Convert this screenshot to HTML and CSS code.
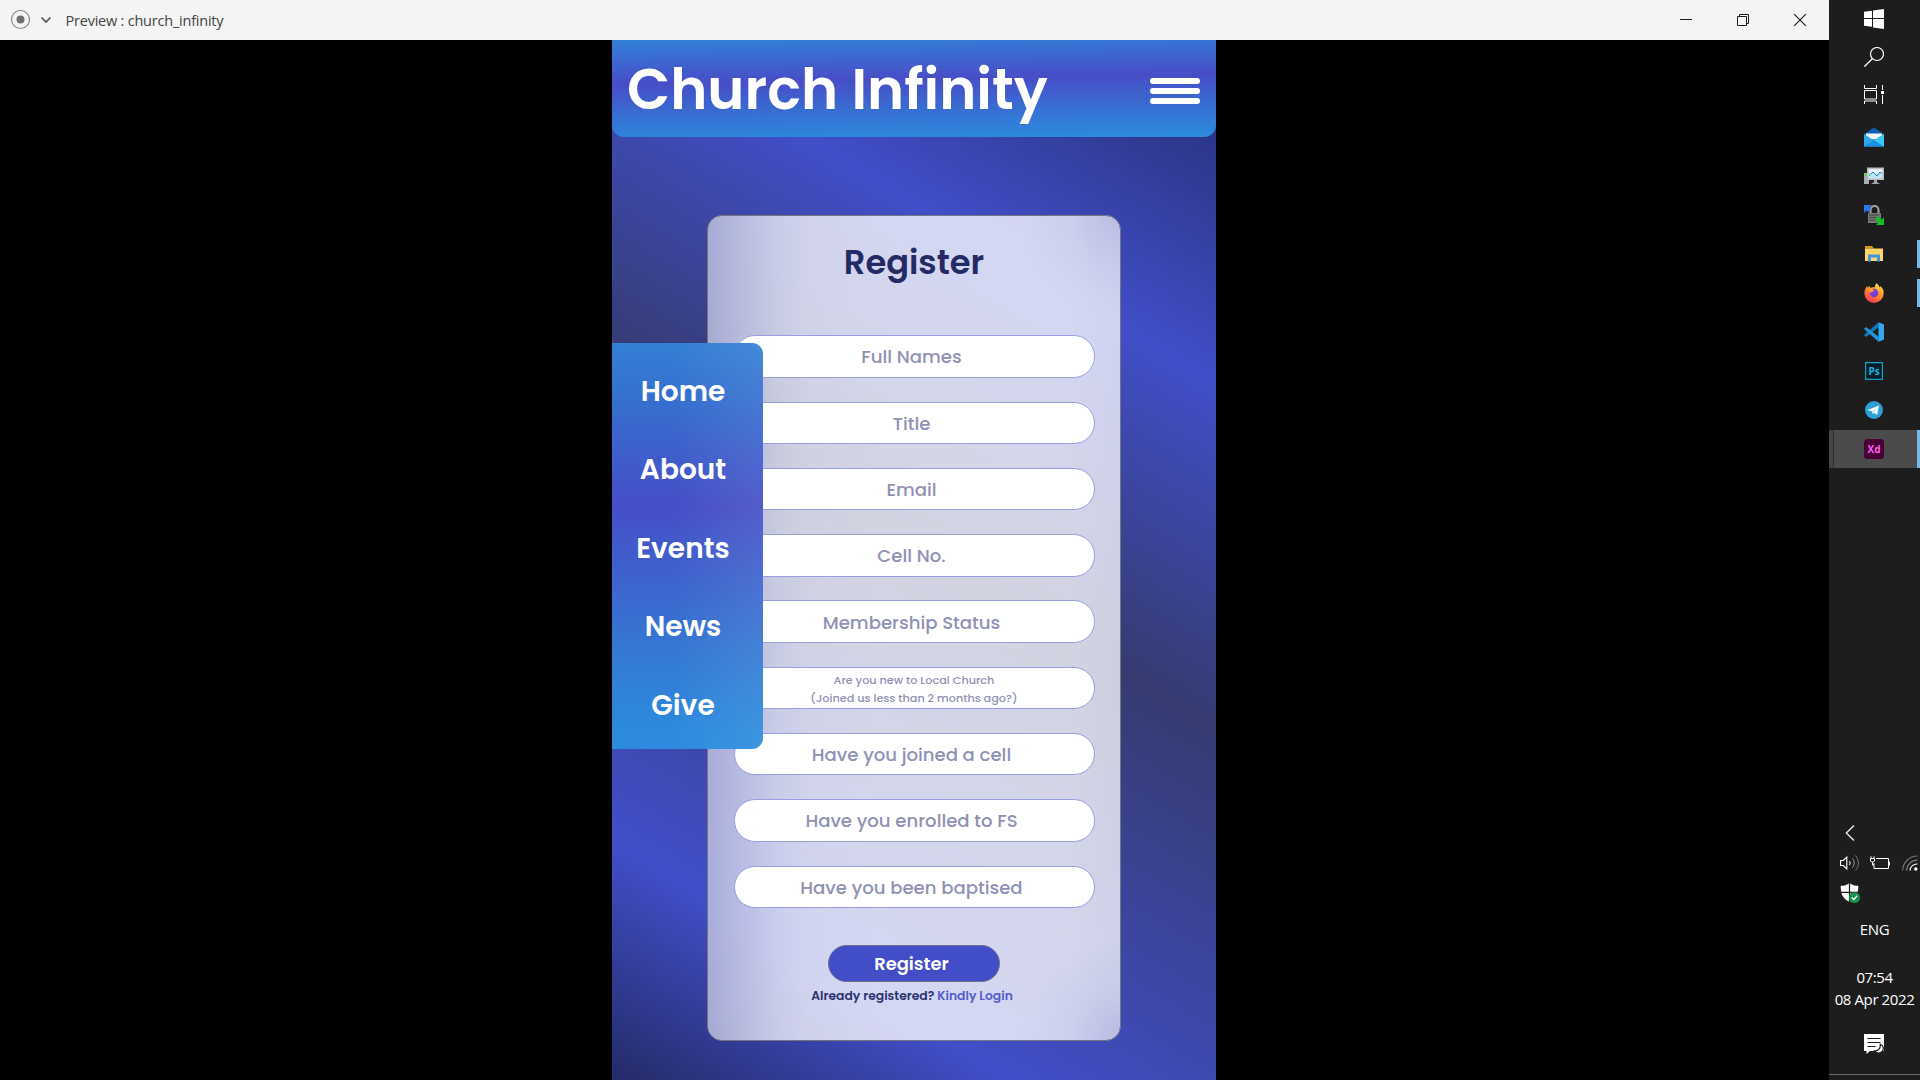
FILE: index.html
```html
<!DOCTYPE html>
<html lang="en">
<head>
<meta charset="utf-8">
<title>Preview : church_infinity</title>
<link rel="stylesheet" href="styles.css">
</head>
<body>
<div class="desktop">
  <div class="window">
    <header class="titlebar">
      <svg class="tb-record" width="20" height="20" viewBox="0 0 20 20"><circle cx="10.500" cy="9.500" r="9" fill="none" stroke="#8b8b8b" stroke-width="1.2"/><circle cx="10.500" cy="9.500" r="4" fill="#707070"/></svg>
      <svg class="tb-arrow" width="12" height="8" viewBox="0 0 12 8"><path d="M1.5 1.5 6 6l4.500-4.500" fill="none" stroke="#555" stroke-width="1.700"/></svg>
      <span class="tb-title">Preview : church_infinity</span>
      <div class="tb-controls">
        <svg width="12" height="12" viewBox="0 0 12 12"><path d="M0 5.500h12" stroke="#1c1c1c"/></svg>
        <svg width="12" height="12" viewBox="0 0 12 12"><path d="M.5 2.500h9v9h-9zM2.500 2.500v-2h9v9h-2" fill="none" stroke="#1c1c1c"/></svg>
        <svg width="12" height="12" viewBox="0 0 12 12"><path d="M0 0 12 12M12 0 0 12" stroke="#1c1c1c" stroke-width="1.100"/></svg>
      </div>
    </header>
    <div class="stage">
      <main class="phone">
        <header class="app-header">
          <h1 class="brand">Church Infinity</h1>
          <div class="burger"><i></i><i></i><i></i></div>
        </header>
        <section class="card">
          <h2 class="card-title">Register</h2>
          <div class="fields">
            <div class="field">Full Names</div>
            <div class="field">Title</div>
            <div class="field">Email</div>
            <div class="field">Cell No.</div>
            <div class="field">Membership Status</div>
            <div class="field field-small">Are you new to Local Church<br>(Joined us less than 2 months ago?)</div>
            <div class="field">Have you joined a cell</div>
            <div class="field">Have you enrolled to FS</div>
            <div class="field">Have you been baptised</div>
          </div>
          <div class="submit">Register</div>
          <p class="login">Already registered? <a>Kindly Login</a></p>
        </section>
        <nav class="menu">
          <a>Home</a><a>About</a><a>Events</a><a>News</a><a>Give</a>
        </nav>
      </main>
    </div>
  </div>
  <aside class="taskbar">
    <div class="slot slot-sys"><svg width="20" height="20" viewBox="0 0 20 20"><path d="M0 2.800 8 1.700V9H0zM9 1.500 20 0v9H9zM0 10h8v7.700L0 16.800zM9 10h11v10L9 18.400z" fill="#fff"/></svg></div>
    <div class="slot slot-sys"><svg width="20" height="20" viewBox="0 0 20 20"><circle cx="13" cy="7" r="6.500" fill="none" stroke="#fff" stroke-width="1.200"/><path d="M8.300 11.700.4 19.600" stroke="#fff" stroke-width="1.300"/></svg></div>
    <div class="slot slot-sys"><svg width="20" height="20" viewBox="0 0 20 20"><path d="M.5 0v3.500h12V0M.5 5.500h12v8.500H.5zM.5 19v-3h12v3M18.500 0v5M18.500 10v9" fill="none" stroke="#fff"/><path d="M17 6h3v3h-3z" fill="#fff"/></svg></div>
    <div class="slot slot-first"><svg width="20" height="20" viewBox="0 0 20 20"><path d="M0 7 10 .5 20 7v3H0z" fill="#0a5fb4"/><path d="M2 6.500h16v6H2z" fill="#f4f4f4"/><path d="M0 7l10 6.500L20 7v12.500H0z" fill="#29a9ea"/><path d="M20 7v12.500L10 13.200z" fill="#3cc9f6"/><path d="M0 19.500 10 13.200l10 6.300z" fill="#1b8fe0"/></svg></div>
    <div class="slot"><svg width="20" height="20" viewBox="0 0 20 20"><path d="M0 7h5v11H0z" fill="#a9adb0"/><path d="M.5 8h3v2h-3z" fill="#4fe03b"/><path d="M3 1.500h17V14H3z" fill="#b9bcbf"/><path d="M4.700 3.200h13.600v9.100H4.700z" fill="#eef9fe"/><path d="M5 10l4-4 4 4 3-3.500 2 2v3.800H5z" fill="#bde7f7"/><path d="M5 9.500 9 6l4 4 3-4 2 1.500" fill="none" stroke="#1a7fc4"/><path d="M10 14h3v2l3 2H7l3-2z" fill="#a5a8ab"/></svg></div>
    <div class="slot"><svg width="20" height="20" viewBox="0 0 20 20"><path d="M6.500 9V5a4 4 0 0 1 8 0v4" fill="none" stroke="#9c9c9c" stroke-width="2.200"/><path d="M4 8h13v10H4z" fill="#777"/><path d="M5 10h10M5 12.500h10M5 15h10" stroke="#444"/><path d="M0 0h8L5.500 2.500 7 4 4 7 2.500 5.500 0 8z" fill="#2b75ee"/><path d="M20 20h-8l2.500-2.500L11 14l3-3 3.500 3.500L20 12z" fill="#14bd23"/></svg></div>
    <div class="slot running"><svg width="20" height="20" viewBox="0 0 20 20"><path d="M1 2h7l2 2.500H1z" fill="#d99a12"/><path d="M1 4.500h18V17H1z" fill="#ffd667"/><path d="M4 17.500v-7h12v7h-3v-4H7v4z" fill="#3f97dd"/></svg></div>
    <div class="slot running"><svg width="20" height="20" viewBox="0 0 20 20"><defs><linearGradient id="fox" x1=".8" y1="0" x2=".2" y2="1"><stop offset="0" stop-color="#ffe34a"/><stop offset=".45" stop-color="#ff9327"/><stop offset="1" stop-color="#f92c5c"/></linearGradient></defs><path d="M12.500.3c2 1.200 2.500 3 3 4l1-1c2.500 2 3.300 4.500 3.100 7A9.600 9.600 0 0 1 .4 10.500C.4 7.500 1.500 5 3 3l.7 2 1.500-2.500.8 2.200L11 4c0-1.500.5-2.800 1.500-3.700z" fill="url(#fox)"/><circle cx="10" cy="10" r="4.300" fill="#7a3fd2"/><path d="M5 6c2-.5 3.500 0 5.500 1.500-1 1.200-2.500 1-3.500 2L5.500 9z" fill="#ff9c2a"/></svg></div>
    <div class="slot"><svg width="20" height="20" viewBox="0 0 20 20"><path d="M14.500 5.500 2 15 .3 13.500V12.700L14.500.3z" fill="#1277bb"/><path d="M14.500 14.500 2 5 .3 6.500v.8L14.500 19.700z" fill="#1f93dc"/><path d="M14.500.2 20 2.500v15L14.500 19.800z" fill="#36a7f0"/></svg></div>
    <div class="slot"><svg width="20" height="20" viewBox="0 0 20 20"><path d="M1.600 1.600h16.800v16.800H1.600z" fill="#001d26" stroke="#0da4c8" stroke-width="1.200"/><text x="10" y="13.700" class="ps">Ps</text></svg></div>
    <div class="slot"><svg width="20" height="20" viewBox="0 0 20 20"><circle cx="10" cy="10" r="9" fill="#2b9fd6"/><path d="M3.500 10 15 5.500 13.200 15l-3-2.200-1.500 1.500-.4-2.800z" fill="#fff"/><path d="M8.300 11.500 13 7.500l-3 5z" fill="#b9dcee"/></svg></div>
    <div class="slot running active"><svg width="20" height="20" viewBox="0 0 20 20"><rect width="20" height="20" rx="3.500" fill="#470137"/><text x="10" y="13.800" class="xd">Xd</text></svg></div>

    <div class="tray">
      <div class="tray-row tray-chevron"><svg width="10" height="16" viewBox="0 0 10 16"><path d="M9 .5 1.300 8 9 15.500" fill="none" stroke="#f0f0f0" stroke-width="1.300"/></svg></div>
      <div class="tray-row tray-status">
        <svg width="20" height="18" viewBox="0 0 20 18"><path d="M.6 6.500h2.700L6.800 3v12L3.300 11.500H.6z" fill="none" stroke="#fff" stroke-width="1.100"/><path d="M9.500 7q1.300 2 0 4" fill="none" stroke="#fff"/><path d="M12.500 4.500q3.500 4.500 0 9" fill="none" stroke="#999"/><path d="M15.500 1.500q6 7.500 0 15" fill="none" stroke="#777"/></svg>
        <svg width="20" height="14" viewBox="0 0 20 14"><path d="M6 2.500h12.500v10H4V7M18.500 6h1v3.500h-1" fill="none" stroke="#fff"/><path d="M.5 2.500h4v2.500l-1 1h-2l-1-1zM1 .3v2M4 .3v2M2.500 6v3H4" fill="none" stroke="#fff"/></svg>
        <svg width="16" height="16" viewBox="0 0 16 16"><g fill="none" stroke-width="1.100"><path d="M.6 15.500A15 15 0 0 1 15.500 1" stroke="#777"/><path d="M4.600 15.500A11 11 0 0 1 15.500 5" stroke="#888"/><path d="M8 15.500A7 7 0 0 1 15.500 9" stroke="#fff"/></g><circle cx="13.800" cy="14" r="1.700" fill="#fff"/></svg>
      </div>
      <div class="tray-row tray-shield"><svg width="20" height="20" viewBox="0 0 20 20"><path d="M9.500 0C7 2 4 2.800.7 2.800c0 8 1.500 12.500 8.800 16.200 7.300-3.700 8.800-8.200 8.800-16.200C15 2.800 12 2 9.500 0z" fill="#fff"/><path d="M9.500 0v19M1 9.300h17" stroke="#1c1c1c" stroke-width="1.200"/><circle cx="14.500" cy="14.500" r="5.500" fill="#16904b"/><path d="M11.800 14.500l2 2 3.500-3.700" fill="none" stroke="#fff" stroke-width="1.300"/></svg></div>
      <div class="lang">ENG</div>
      <div class="clock"><div>07:54</div><div>08 Apr 2022</div></div>
      <div class="notify"><svg width="20" height="20" viewBox="0 0 20 20"><path d="M0 0h20v17H6l-3.500 3v-3H0z" fill="#fff"/><path d="M3.500 4.500h13M3.500 8.500h13M3.500 12.500h8" stroke="#1c1c1c" stroke-width="1.100"/><path d="M16.300 10.200a4.600 4.600 0 1 1-5.600 6.600c3.600.6 6-2.600 5.600-6.600z" fill="#fff" stroke="#1c1c1c" stroke-width="1.200"/></svg></div>
    </div>
  </aside>
</div>
</body>
</html>
```
FILE: styles.css
```css
* { box-sizing: border-box; }

body {
  margin: 0;
  background: #000;
  overflow: hidden;
}

h1, h2, p { margin: 0; }

svg { display: block; }

.desktop {
  display: flex;
  width: 1920px;
  height: 1080px;
}

/* Preview window */
.window {
  display: flex;
  flex-direction: column;
  width: 1829px;
}

.titlebar {
  display: flex;
  align-items: center;
  height: 40px;
  padding: 0 23px 0 10px;
  background: #f4f4f4;
}

.tb-arrow { margin: 0 13.500px 0 10px; }

.tb-title {
  padding-top: 1px;
  font: 400 14.5px/20px "Open Sans", sans-serif;
  letter-spacing: -.22px;
  color: #444;
}

.tb-controls {
  display: flex;
  gap: 45px;
  margin-left: auto;
}

.stage {
  display: flex;
  flex: 1;
  padding-left: 612px;
}

/* App artboard */
.phone {
  position: relative;
  display: flex;
  flex-direction: column;
  align-items: center;
  width: 604px;
  height: 1040px;
  font-family: "Poppins", "Inter", sans-serif;
  background: linear-gradient(211deg, #232b68 0%, #2a3380 5%, #414ec8 24.500%, #353b70 49%, #414ec8 83%, #242b68 100%);
}

.app-header {
  display: flex;
  align-items: center;
  justify-content: space-between;
  width: 100%;
  height: 97px;
  padding: 5px 16px 0 15px;
  border-radius: 0 0 12px 12px;
  background: linear-gradient(179deg, #3181d9 0%, #484dc6 41%, #3378d6 79%, #2b8ade 98%);
}

.brand {
  margin-top: -2px;
  font-size: 56.200px;
  font-weight: 600;
  line-height: 84px;
  color: #fff;
  white-space: nowrap;
}

.burger {
  display: flex;
  flex-direction: column;
  gap: 4px;
  width: 50px;
}

.burger i {
  height: 6px;
  border-radius: 3px;
  background: #fff;
}

.card {
  display: flex;
  flex-direction: column;
  align-items: center;
  width: 414px;
  height: 826px;
  margin-top: 78px;
  border: 1px solid #74757f;
  border-radius: 15px;
  background:
    radial-gradient(circle at 100% 0, rgba(65, 85, 180, .16) 0, rgba(65, 85, 180, .05) 50px, rgba(65, 85, 180, 0) 100px),
    radial-gradient(circle at 100% 100%, rgba(65, 85, 180, .18) 0, rgba(65, 85, 180, .05) 50px, rgba(65, 85, 180, 0) 100px),
    linear-gradient(90deg, rgba(65, 75, 165, .3) 0, rgba(65, 75, 165, .19) 8%, rgba(65, 75, 165, .07) 17%, rgba(65, 75, 165, .02) 24%, rgba(65, 75, 165, 0) 40%, rgba(65, 75, 165, 0) 88%, rgba(65, 75, 165, .03) 100%),
    rgba(252, 253, 255, .79);
}

.card-title {
  margin-top: 23px;
  font-size: 33.700px;
  font-weight: 600;
  line-height: 48px;
  color: #232a66;
}

.fields {
  display: flex;
  flex-direction: column;
  gap: 23.900px;
  width: 361px;
  margin: 48.300px 0 0 1px;
}

.field {
  display: flex;
  align-items: center;
  justify-content: center;
  height: 42.400px;
  padding: 1px 6px 0 0;
  border: 1px solid #979ee2;
  border-radius: 21.200px;
  background: #fff;
  font-size: 18.100px;
  font-weight: 500;
  color: #8f91b5;
  text-align: center;
  white-space: nowrap;
}

.field-small {
  padding: 2px 1px 0 0;
  font-size: 11.250px;
  line-height: 18px;
}

.submit {
  width: 172px;
  height: 37px;
  margin-top: 37.300px;
  padding-right: 5px;
  border: 1px solid #6d6f86;
  border-radius: 18.500px;
  background: #414ec8;
  font-size: 17.900px;
  font-weight: 600;
  line-height: 35px;
  color: #fff;
  text-align: center;
}

.login {
  margin-top: 4px;
  padding-right: 4px;
  font-size: 12.350px;
  font-weight: 600;
  line-height: 20px;
  color: #2c3270;
}

.login a { color: #525ccc; }

/* Slide-out menu lying over the form */
.menu {
  position: absolute;
  left: 0;
  top: 303px;
  display: flex;
  flex-direction: column;
  align-items: center;
  width: 151px;
  height: 406px;
  padding: 9.700px 9px 0 0;
  border-radius: 0 11px 11px 0;
  background:
    linear-gradient(90deg, rgba(255, 255, 255, 0) 40%, rgba(255, 255, 255, .08) 100%),
    linear-gradient(180deg, #347fd6 0%, #3472d0 12%, #464ec6 40%, #3478d4 76%, #2c8bde 96%);
}

.menu a {
  font-size: 28px;
  font-weight: 600;
  line-height: 78.500px;
  color: #fff;
}

/* Vertical Windows taskbar */
.taskbar {
  display: flex;
  flex-direction: column;
  width: 91px;
  background: #1d1d1d;
}

.slot {
  display: flex;
  align-items: center;
  justify-content: center;
  height: 39px;
  flex: none;
  padding-right: 1px;
}

.slot-sys { height: 38px; }

.slot-first { margin-top: 3px; }

.running {
  padding: 0 0 0 2px;
  border-right: 3px solid #76b9ed;
  height: 28px;
  margin: 6px 0 5px;
}

.active {
  height: 38px;
  margin: 1px 0 0;
  background: linear-gradient(90deg, #444 4px, #303030 4px, #303030 5px, #4b4b4b 5px);
}

.ps, .xd {
  font: 700 10px "Open Sans", sans-serif;
  text-anchor: middle;
  fill: #19b5e0;
}

.xd { fill: #ff61f6; }

.tray {
  height: 262px;
  margin-top: auto;
  font: 400 15px/22px "Open Sans", sans-serif;
  letter-spacing: -.4px;
  color: #fff;
  text-align: center;
}

.tray-row {
  display: flex;
  align-items: center;
  height: 30px;
  padding-left: 11px;
}

.tray-chevron { padding-left: 16px; }

.tray-status { gap: 10px; }

.tray-status svg { flex: none; }

.tray-status svg:last-child { margin-left: 2px; }

.lang { line-height: 42px; }

.clock {
  margin-top: 16px;
  white-space: nowrap;
}

.notify {
  display: flex;
  justify-content: center;
  height: 65px;
  padding: 24px 1px 0 0;
  border-bottom: 1px solid #6a6a6a;
}
```
